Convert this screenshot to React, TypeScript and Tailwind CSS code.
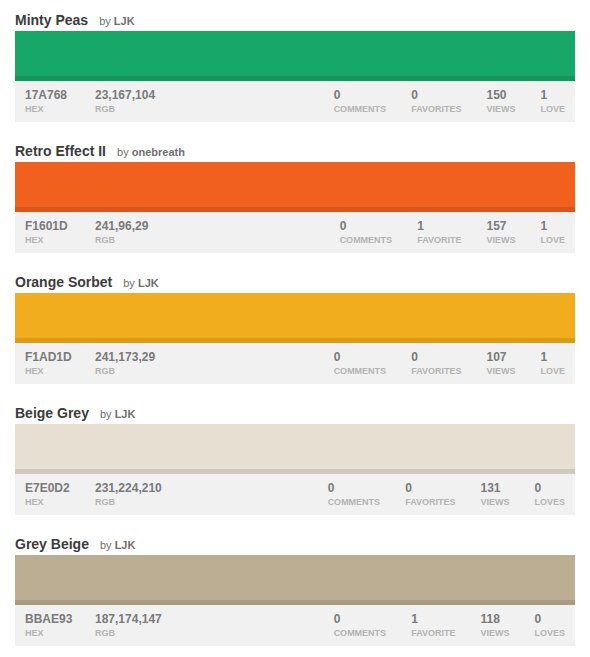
const colors = [
  { name: 'Minty Peas', user: 'LJK', hex: '17A768', rgb: '23,167,104', comments: 0, favorites: 0, views: 150, loves: 1 },
  { name: 'Retro Effect II', user: 'onebreath', hex: 'F1601D', rgb: '241,96,29', comments: 0, favorites: 1, views: 157, loves: 1 },
  { name: 'Orange Sorbet', user: 'LJK', hex: 'F1AD1D', rgb: '241,173,29', comments: 0, favorites: 0, views: 107, loves: 1 },
  { name: 'Beige Grey', user: 'LJK', hex: 'E7E0D2', rgb: '231,224,210', comments: 0, favorites: 0, views: 131, loves: 0 },
  { name: 'Grey Beige', user: 'LJK', hex: 'BBAE93', rgb: '187,174,147', comments: 0, favorites: 1, views: 118, loves: 0 },
];

function Stat({ value, label }: { value: string | number; label: string }) {
  return (
    <div>
      <div className="text-[12px] leading-[14px] font-bold text-[#7a7a7a]">{value}</div>
      <div className="mt-[2px] text-[9px] leading-[11px] font-bold uppercase text-[#b3b3b3]">{label}</div>
    </div>
  );
}

export default function App() {
  return (
    <div className="min-h-[657px] bg-white px-[15px] pt-[10px]" style={{ fontFamily: '"Liberation Sans", Arial, sans-serif' }}>
      {colors.map((c) => (
        <div key={c.hex} className="mb-[19px]">
          <div className="flex items-baseline h-[21px] leading-[21px]">
            <span className="text-[14px] font-bold text-[#3b3b3b]">{c.name}</span>
            <span className="ml-[11px] text-[11px] text-[#6f6f6f]">
              by <span className="font-bold">{c.user}</span>
            </span>
          </div>
          <div className="h-[50px] flex flex-col" style={{ backgroundColor: '#' + c.hex }}>
            <div className="flex-1" />
            <div className="h-[5px] bg-black/10" />
          </div>
          <div className="h-[41px] bg-[#f1f1f1] flex pt-[7px] pl-[10px] pr-[10px]">
            <div className="w-[70px]">
              <Stat value={c.hex} label="Hex" />
            </div>
            <Stat value={c.rgb} label="RGB" />
            <div className="ml-auto flex gap-[25px]">
              <Stat value={c.comments} label="Comments" />
              <Stat value={c.favorites} label={c.favorites === 1 ? 'Favorite' : 'Favorites'} />
              <Stat value={c.views} label="Views" />
              <Stat value={c.loves} label={c.loves === 1 ? 'Love' : 'Loves'} />
            </div>
          </div>
        </div>
      ))}
    </div>
  );
}
